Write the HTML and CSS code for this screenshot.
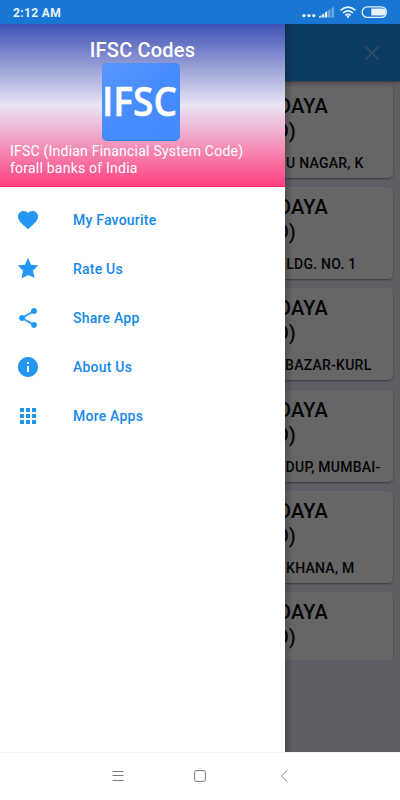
FILE: index.html
```html
<!DOCTYPE html>
<html lang="en">
<head>
<meta charset="utf-8">
<title>IFSC Codes</title>
<link rel="stylesheet" href="styles.css">
</head>
<body>
<div class="status">
  <span class="time">2:12 AM</span>
  <svg class="status-icons" width="88" height="24" viewBox="0 0 88 24" fill="#e8f3fc">
    <circle cx="4" cy="15.6" r="1.7"/><circle cx="9" cy="15.6" r="1.7"/><circle cx="13.8" cy="15.6" r="1.7"/>
    <path d="M19 17.5v-1.3l2.4-1v2.3zM22 17.5v-2.8l2.3-1.4v4.2zM25 17.5v-5l2.3-1.5v6.5z"/>
    <path opacity=".4" d="M28 17.5v-7.2l2.5-1.5v8.7zM31.5 17.5V8.3L34 6.8v10.7z"/>
    <g fill="none" stroke="#e8f3fc" stroke-width="1.6"><path d="M40.6 10.3q7.4-6.2 14.8 0M43 13q5-4.2 10 0M45.3 15.4q2.7-2.2 5.4 0"/></g>
    <circle cx="48" cy="16.8" r="1.2"/>
    <rect x="62.3" y="6.8" width="24" height="10.6" rx="5" fill="none" stroke="#e8f3fc" stroke-width="1.3"/>
    <path d="M71.3 8.6h10.9a3.5 3.5 0 0 1 0 7H71.3z"/>
  </svg>
</div>
<div class="screen">
  <aside class="drawer">
    <header class="drawer-head">
      <h1>IFSC Codes</h1>
      <svg class="logo" width="78" height="78" viewBox="0 0 78 78">
        <defs><linearGradient id="lg" x1="0" y1="0" x2="1" y2="1"><stop offset="0" stop-color="#5797fc"/><stop offset=".5" stop-color="#478cff"/><stop offset="1" stop-color="#4489fd"/></linearGradient></defs>
        <rect width="78" height="78" rx="5" fill="#2889ec"/>
        <rect width="78" height="77" rx="5" fill="url(#lg)"/>
        <text class="logo-text" x="0" y="52.5" textLength="75" lengthAdjust="spacingAndGlyphs">IFSC</text>
      </svg>
      <p>IFSC (Indian Financial System Code)<br>forall banks of India</p>
    </header>
    <nav class="menu">
      <a><svg viewBox="0 0 24 24"><path d="M12 21.35l-1.45-1.32C5.4 15.36 2 12.28 2 8.5 2 5.42 4.42 3 7.5 3c1.74 0 3.41.81 4.5 2.09C13.09 3.81 14.76 3 16.5 3 19.58 3 22 5.42 22 8.5c0 3.78-3.4 6.86-8.55 11.54L12 21.35z"/></svg>My Favourite</a>
      <a><svg viewBox="0 0 24 24"><path d="M12 .8l3.1 6.9 7.3.8-5.4 5 1.5 7.3L12 17.9l-6.5 3.7L7 13.5l-5.4-5 7.3-.8z"/></svg>Rate Us</a>
      <a><svg viewBox="0 0 24 24"><path d="M18 16.08c-.76 0-1.44.3-1.96.77L8.91 12.7c.05-.23.09-.46.09-.7s-.04-.47-.09-.7l7.05-4.11c.54.5 1.25.81 2.04.81 1.66 0 3-1.34 3-3s-1.34-3-3-3-3 1.34-3 3c0 .24.04.47.09.7L8.04 9.81C7.5 9.31 6.79 9 6 9c-1.66 0-3 1.34-3 3s1.34 3 3 3c.79 0 1.5-.31 2.04-.81l7.12 4.16c-.05.21-.08.43-.08.65 0 1.61 1.31 2.92 2.92 2.92s2.92-1.31 2.92-2.92-1.31-2.92-2.92-2.92z"/></svg>Share App</a>
      <a><svg viewBox="0 0 24 24"><path d="M12 2C6.48 2 2 6.48 2 12s4.48 10 10 10 10-4.48 10-10S17.52 2 12 2zm1 15h-2v-6h2v6zm0-8h-2V7h2v2z"/></svg>About Us</a>
      <a><svg viewBox="0 0 24 24"><path d="M4 8h4V4H4v4zm6 12h4v-4h-4v4zm-6 0h4v-4H4v4zm0-6h4v-4H4v4zm6 0h4v-4h-4v4zm6-10v4h4V4h-4zm-6 4h4V4h-4v4zm6 6h4v-4h-4v4zm0 6h4v-4h-4v4z"/></svg>More Apps</a>
    </nav>
  </aside>
  <main class="page">
    <div class="appbar"><svg width="16" height="16" viewBox="0 0 16 16"><path d="M1.5 1.5l13 13M14.5 1.5l-13 13" stroke="#32506a" stroke-width="1.6"/></svg></div>
    <div class="list">
      <article class="card"><h2>DAYA</h2><h2 class="second">D)</h2><p>U NAGAR, K</p></article>
      <article class="card"><h2>DAYA</h2><h2 class="second">D)</h2><p class="e2">LDG. NO. 1</p></article>
      <article class="card"><h2>DAYA</h2><h2 class="second">D)</h2><p class="e3">BAZAR-KURL</p></article>
      <article class="card"><h2>DAYA</h2><h2 class="second">D)</h2><p class="e4">DUP, MUMBAI-</p></article>
      <article class="card"><h2>DAYA</h2><h2 class="second">D)</h2><p class="e5">KHANA, M</p></article>
      <article class="card"><h2>DAYA</h2><h2 class="second">D)</h2></article>
    </div>
  </main>
</div>
<footer class="navbar">
  <svg width="12" height="12" viewBox="0 0 12 12"><path d="M.5 1.5h11M.5 5.5h11M.5 10.5h11"/></svg>
  <svg width="12" height="12" viewBox="0 0 12 12"><rect x=".6" y=".6" width="10.8" height="10.8" rx="2"/></svg>
  <svg width="12" height="12" viewBox="0 0 12 12"><path d="M11 .5L5.3 6 11 11.5"/></svg>
</footer>
</body>
</html>
```
FILE: styles.css
```css
* { box-sizing: border-box; margin: 0; padding: 0; }
body { width: 400px; height: 800px; overflow: hidden; background: #fff; font-family: Roboto, "Liberation Sans", sans-serif; display: flex; flex-direction: column; }
.status { height: 24px; flex: none; background: #1976d2; display: flex; justify-content: space-between; padding: 0 12px 0 13px; }
.time { font-size: 12px; line-height: 26px; font-weight: 700; color: #e8f3fc; letter-spacing: .35px; }
.screen { height: 728px; flex: none; display: flex; overflow: hidden; }
.drawer { width: 285px; flex: none; background: #fff; }
.drawer-head { height: 163px; padding: 14px 14px 0 10px; display: flex; flex-direction: column; align-items: center; color: #fff; background: linear-gradient(#3f51b5, #e8e5f5 50%, #ff4081); border-bottom: 1px solid #f52470; }
.drawer-head h1 { font-size: 20px; line-height: 24px; font-weight: 500; letter-spacing: .2px; margin-left: 4px; }
.logo { display: block; flex: none; margin-top: .5px; }
.logo-text { font-family: "Open Sans", "Noto Sans", sans-serif; font-size: 40px; font-weight: 600; fill: #fff; stroke: #fff; stroke-width: .5px; }
.drawer-head p { align-self: stretch; font-size: 14px; line-height: 17px; padding-top: 2.5px; letter-spacing: .22px; white-space: nowrap; }
.menu { padding-top: 8px; }
.menu a { height: 49px; display: flex; align-items: center; padding-left: 16px; gap: 33px; font-size: 14px; font-weight: 500; letter-spacing: .22px; line-height: 18px; padding-top: 1px; color: #1689ea; }
.menu svg { width: 24px; height: 24px; fill: #2196f3; }
.page { flex: 1; min-width: 0; overflow: hidden; background: linear-gradient(90deg, #4c4a50, #605d64 8px); }
.appbar { height: 57px; display: flex; justify-content: flex-end; align-items: center; padding-right: 20px; background: linear-gradient(90deg, #0a3050, #0d3c61 8px); box-shadow: 0 1px 3px rgba(0,0,0,.45); }
.list { height: 579px; overflow: hidden; padding: 5px 7px 0 0; display: flex; flex-direction: column; gap: 9.2px; }
.card { height: 92px; flex: none; padding-top: 8px; border-radius: 0 5px 5px 0; background: linear-gradient(90deg, #515151, #666 8px); box-shadow: 0 1px 2px rgba(0,0,0,.4); color: #050505; text-align: right; overflow: hidden; white-space: nowrap; }
.card h2 { font-size: 20px; line-height: 25px; font-weight: 500; letter-spacing: .15px; margin-left: -40px; padding-right: 65px; }
.card .second { padding-right: 97px; }
.card p { font-size: 14px; line-height: 18px; font-weight: 500; letter-spacing: .25px; margin: 10px 0 0 -40px; padding-right: 29.5px; }
.card .e2 { padding-right: 36.5px; }
.card .e3 { padding-right: 21.5px; }
.card .e4 { padding-right: 12.5px; }
.card .e5 { padding-right: 38.5px; }
.navbar { height: 48px; flex: none; border-top: 1px solid #f4f4f4; display: flex; justify-content: center; align-items: center; gap: 70px; padding-bottom: 2px; }
.navbar svg { fill: none; stroke: #777; stroke-width: 1; }
```
